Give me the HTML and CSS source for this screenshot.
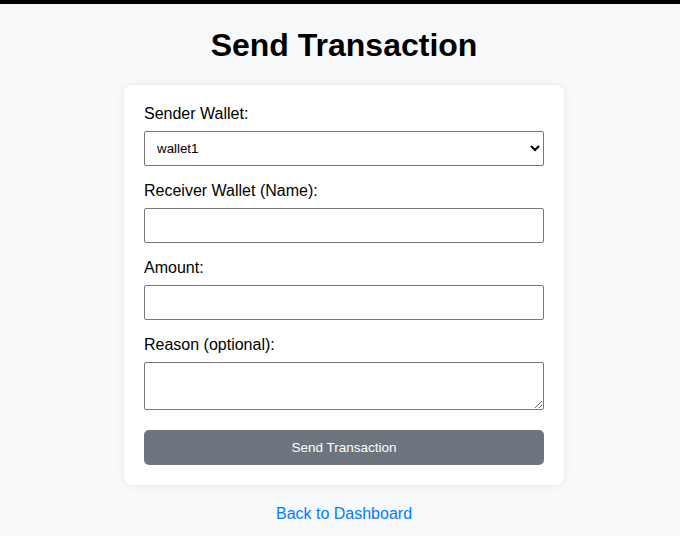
FILE: index.html
```html
<!DOCTYPE html>
<html lang="en">
<head>
<meta charset="utf-8">
<title>Send Transaction</title>
<link rel="stylesheet" href="styles.css">
</head>
<body>
<div class="topbar"></div>
<main class="page">
  <h1 class="title">Send Transaction</h1>
  <form class="card">
    <label class="field-label" for="sender">Sender Wallet:</label>
    <select class="control" id="sender">
      <option>wallet1</option>
    </select>
    <label class="field-label" for="receiver">Receiver Wallet (Name):</label>
    <input class="control" id="receiver" type="text">
    <label class="field-label" for="amount">Amount:</label>
    <input class="control" id="amount" type="text">
    <label class="field-label" for="reason">Reason (optional):</label>
    <textarea class="control textarea" id="reason"></textarea>
    <button class="submit" type="button">Send Transaction</button>
  </form>
  <a class="back" href="#">Back to Dashboard</a>
</main>
</body>
</html>
```
FILE: styles.css
```css
html, body {
  margin: 0;
  padding: 0;
}
body {
  background: #f8f9fa;
  font-family: "Liberation Sans", Arial, sans-serif;
  color: #000;
}
.topbar {
  height: 4px;
  background: #000;
}
.page {
  display: flex;
  flex-direction: column;
  align-items: center;
  padding-left: 8px;
}
.title {
  font-size: 32px;
  font-weight: bold;
  margin: 22.5px 0 21.5px;
  line-height: normal;
}
.card {
  width: 400px;
  padding: 20px;
  background: #fff;
  border-radius: 8px;
  box-shadow: 0 0 8px rgba(0, 0, 0, 0.08);
  display: flex;
  flex-direction: column;
  margin: 0;
}
.field-label {
  display: block;
  font-size: 16px;
  line-height: 18px;
  margin-bottom: 8px;
}
.control {
  box-sizing: border-box;
  width: 100%;
  height: 35px;
  margin: 0 0 16px 0;
  padding: 8px;
  border: 1px solid #767676;
  border-radius: 2px;
  background: #fff;
  font-family: "Liberation Sans", Arial, sans-serif;
  font-size: 13.33px;
  color: #000;
}
select.control {
  padding: 0 8px;
}
.textarea {
  height: 48px;
  margin-bottom: 20px;
  resize: vertical;
}
.submit {
  height: 35px;
  width: 100%;
  border: none;
  border-radius: 5px;
  background: #6c757d;
  color: #fff;
  font-family: "Liberation Sans", Arial, sans-serif;
  font-size: 13.5px;
  padding: 0;
  cursor: pointer;
}
.back {
  margin-top: 20px;
  font-size: 16px;
  line-height: 18px;
  color: #007bff;
  text-decoration: none;
}
```
